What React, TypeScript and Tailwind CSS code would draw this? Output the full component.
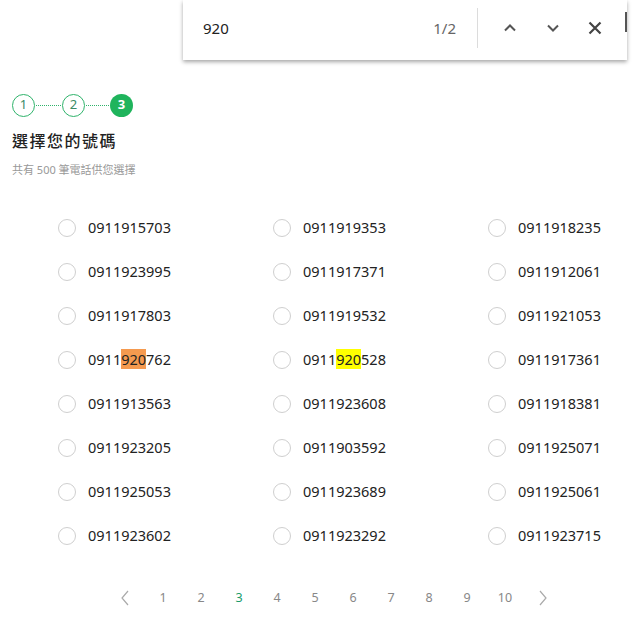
import React from 'react';

const numbers: string[] = [
  '0911915703', '0911919353', '0911918235',
  '0911923995', '0911917371', '0911912061',
  '0911917803', '0911919532', '0911921053',
  '0911920762', '0911920528', '0911917361',
  '0911913563', '0911923608', '0911918381',
  '0911923205', '0911903592', '0911925071',
  '0911925053', '0911923689', '0911925061',
  '0911923602', '0911923292', '0911923715',
];

const pages = ['1', '2', '3', '4', '5', '6', '7', '8', '9', '10'];

// find-in-page highlight: the first match is the active one
function NumberText({ value, index }: { value: string; index: number }) {
  const pos = value.indexOf('920');
  if (pos === -1) return <span>{value}</span>;
  const matchIndex = numbers.filter((n, i) => i < index && n.includes('920')).length;
  const mark = matchIndex === 0 ? 'bg-[#f59a4f]' : 'bg-[#ffff00]';
  return (
    <span>
      {value.slice(0, pos)}
      <span className={mark}>{value.slice(pos, pos + 3)}</span>
      {value.slice(pos + 3)}
    </span>
  );
}

function FindBar() {
  return (
    <div className="absolute left-[183px] top-0 w-[444px] h-[60px] pb-[4px] bg-white shadow-[0_2px_4px_rgba(0,0,0,0.35)] flex items-center">
      <span className="ml-[20px] text-[15px] text-[#222] flex-1">920</span>
      <span className="text-[15px] text-[#666] mr-[21px]">1/2</span>
      <div className="w-px h-[40px] bg-[#dcdcdc]" />
      <div className="flex items-center ml-[24px] mr-[24px]">
        <svg width="16" height="16" viewBox="0 0 16 16" fill="none" stroke="#555" strokeWidth="2">
          <path d="M3 10.5 8 5.5l5 5" />
        </svg>
        <svg className="ml-[27px]" width="16" height="16" viewBox="0 0 16 16" fill="none" stroke="#555" strokeWidth="2">
          <path d="M3 5.5 8 10.5l5-5" />
        </svg>
        <svg className="ml-[26px]" width="16" height="16" viewBox="0 0 16 16" fill="none" stroke="#444" strokeWidth="2.2">
          <path d="M2.5 2.5l11 11M13.5 2.5l-11 11" />
        </svg>
      </div>
      <div className="absolute right-0 top-[12px] w-[2px] h-[20px] bg-[#555]" />
    </div>
  );
}

function Steps() {
  return (
    <div className="flex items-center h-[24px]">
      <div className="w-[23px] h-[23px] rounded-full border border-[#2fb36b] text-[#3a8a66] text-[13px] flex items-center justify-center">1</div>
      <div className="w-[25px] border-t border-dotted border-[#2fb36b] mx-[1px]" />
      <div className="w-[23px] h-[23px] rounded-full border border-[#2fb36b] text-[#3a8a66] text-[13px] flex items-center justify-center">2</div>
      <div className="w-[23px] border-t border-dotted border-[#2fb36b] mx-[1px]" />
      <div className="w-[23px] h-[23px] rounded-full bg-[#1fb45c] text-white text-[13px] font-bold flex items-center justify-center">3</div>
    </div>
  );
}

export default function App() {
  return (
    <div
      className="relative w-full h-[621px] bg-white overflow-hidden"
      style={{ fontFamily: '"Noto Sans", "Noto Sans CJK TC", sans-serif' }}
    >
      <div className="pt-[93px] px-3">
        <Steps />
        <h2 className="mt-[13px] text-[16px] leading-[22px] tracking-[1.5px] font-medium text-[#222]">選擇您的號碼</h2>
        <p className="mt-[11px] text-[11px] leading-[14px] text-[#999]">共有 500 筆電話供您選擇</p>

        <div className="mt-[29px] ml-[46px] grid grid-cols-[215px_215px_150px]">
          {numbers.map((n, i) => (
            <label key={n} className="h-[44px] flex items-center gap-[12px] cursor-pointer">
              <span className="w-[18px] h-[18px] rounded-full border border-[#cfcfcf] bg-white" />
              <span className="text-[14.5px] text-[#222]">
                <NumberText value={n} index={i} />
              </span>
            </label>
          ))}
        </div>
      </div>

      <nav className="mt-[30px] ml-[106px] flex items-center h-[20px] text-[12.5px] text-[#888]" aria-label="pagination">
        <span className="w-[38px] flex justify-center">
          <svg width="10" height="16" viewBox="0 0 10 16" fill="none" stroke="#aaa" strokeWidth="1.2">
            <path d="M8 1 2 8l6 7" />
          </svg>
        </span>
        {pages.map((p) => (
          <span key={p} className={`w-[38px] text-center ${p === '3' ? 'text-[#1a9c6a]' : ''}`}>
            {p}
          </span>
        ))}
        <span className="w-[38px] flex justify-center">
          <svg width="10" height="16" viewBox="0 0 10 16" fill="none" stroke="#aaa" strokeWidth="1.2">
            <path d="M2 1l6 7-6 7" />
          </svg>
        </span>
      </nav>

      <FindBar />
    </div>
  );
}
